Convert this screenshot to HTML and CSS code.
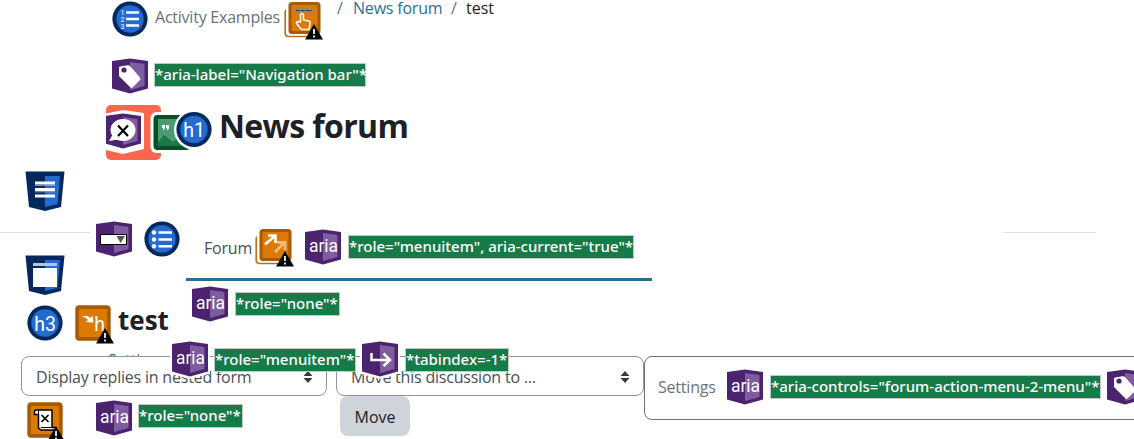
FILE: index.html
```html
<!DOCTYPE html>
<html lang="en">
<head>
    <meta charset="UTF-8">
    <meta name="viewport" content="width=device-width, initial-scale=1.0">
    <title>News forum: test</title>
    <link rel="stylesheet" href="styles.css">
</head>
<body>
    <!-- shared icon shapes -->
    <svg class="defs" aria-hidden="true">
        <symbol id="shield" viewBox="0 0 36 36">
            <path d="M0 3L18 .5L36 3V30.500L18 35.500L0 30.500z" fill="#4b236f"/>
            <path d="M18 4L32.500 6V28L18 32z" fill="#7f5c9f"/>
        </symbol>
        <symbol id="aria" viewBox="0 0 36 36">
            <use href="#shield" width="36" height="36"/>
            <text x="18.500" y="23" class="icon-text aria-text">aria</text>
        </symbol>
        <symbol id="tag" viewBox="0 0 36 36">
            <use href="#shield" width="36" height="36"/>
            <path d="M8 8.500Q7 8.500 7 10V18L18.500 29.500Q19.500 30 20.500 29.500L28 22Q29 21 28 19.500L18 8Q17 7 15.500 7.200z" fill="#fff"/>
            <circle cx="12" cy="12" r="2.600" fill="#4b236f"/>
        </symbol>
        <symbol id="disc" viewBox="0 0 36 36">
            <circle cx="18" cy="18" r="17.600" fill="#03295c"/>
            <circle cx="18" cy="18" r="13.700" fill="#216bd1"/>
        </symbol>
        <symbol id="css" viewBox="0 0 40 40">
            <path d="M.5.500H39.500L36 36L20 40L4 36z" fill="#03295c"/>
            <path d="M20 5H35L32.500 33L20 36z" fill="#216bd1"/>
        </symbol>
        <symbol id="alert" viewBox="0 0 18 16">
            <path d="M9 0L18 15.500H0z" fill="#000"/>
            <path d="M9 5V10M9 11.500V13.500" stroke="#fff" stroke-width="1.700"/>
        </symbol>
        <symbol id="box" viewBox="0 0 36 36">
            <rect x=".3" y=".3" width="35.400" height="35.400" rx="4" fill="#a65b00"/>
            <rect x="4" y="4" width="28" height="28" rx="1" fill="#db7900"/>
        </symbol>
        <symbol id="stack" viewBox="0 0 40 40">
            <path d="M2 10Q1.200 10 1.200 12V33Q1.200 36.500 4.500 36.500H30" fill="none" stroke="#b86f17" stroke-width="1.600"/>
            <rect x="4.500" y="2" width="32" height="32" rx="3.500" fill="#a65b00"/>
            <rect x="7.500" y="5" width="26" height="26" rx="1" fill="#db7900"/>
        </symbol>
    </svg>

    <div class="page">
        <nav class="breadcrumb">
            <svg class="icon" viewBox="0 0 36 36">
                <use href="#disc" width="36" height="36"/>
                <path d="M14 11.500H27M14 18H27M14 24.500H27" stroke="#fff" stroke-width="2.300"/>
                <g class="icon-text tiny-text"><text x="10.500" y="13.500">1</text><text x="10.500" y="20.500">2</text><text x="10.500" y="27.500">3</text></g>
            </svg>
            <span class="crumb-first">Activity Examples</span>
            <svg class="icon-lg" viewBox="0 0 40 40">
                <use href="#stack" width="40" height="40"/>
                <path d="M10.500 8.500H30V12.500H10.500z" fill="#888"/>
                <path d="M12 10.500H28" stroke="#333" stroke-dasharray="4 1"/>
                <path d="M16.500 22V14.500Q18 12.500 19.500 14.500V20L25 21Q26.500 21.500 26 24L25 29.500H17.500L12.500 23.500Q12 21.500 14 21.500z" fill="#db7900" stroke="#fff" stroke-width="1.500" stroke-linejoin="round"/>
                <use href="#alert" x="21" y="24" width="18" height="16"/>
            </svg>
            <span class="sep">/</span>
            <a class="crumb-link">News forum</a>
            <span class="sep">/</span>
            <span class="crumb-last">test</span>
        </nav>

        <div class="note-row nav-note">
            <svg class="icon"><use href="#tag"/></svg>
            <span class="note w212">*aria-label="Navigation bar"*</span>
        </div>

        <header class="page-header">
            <div class="module-icon">
                <svg class="header-icons" viewBox="0 0 106 55">
                    <path d="M0 8.500L17 5L38 8V44L17 49L0 45z" fill="#fff"/>
                    <use href="#shield" x="-1" y="8" width="36" height="36"/>
                    <ellipse cx="17" cy="25" rx="12.500" ry="11" fill="#fff"/>
                    <path d="M7 29L3 36L15 34z" fill="#fff"/>
                    <path d="M12 20.500L22 31M22 20.500L12 31" stroke="#000" stroke-width="2.200"/>
                    <rect x="44.500" y="7" width="42" height="41" rx="6" fill="#fff"/>
                    <rect x="47.500" y="10" width="37" height="35" rx="4" fill="#005126"/>
                    <path d="M52 14H82V41H52z" fill="#177a49"/>
                    <path d="M52 14H82V41L73 32L67 37L58 30L52 37z" fill="#4d9b73"/>
                    <path d="M56 20H59V23L58 25H57V23H56zM60 20H63V23L62 25H61V23H60z" fill="#fff"/>
                    <circle cx="88" cy="24.700" r="20" fill="#fff"/>
                    <use href="#disc" x="70" y="6.500" width="36" height="36"/>
                    <text x="88" y="31.500" class="icon-text h-text">h1</text>
                </svg>
            </div>
            <h1>News forum</h1>
        </header>

        <div class="middle">
            <aside class="rail">
                <svg class="icon-css" viewBox="0 0 40 40">
                    <use href="#css" width="40" height="40"/>
                    <path d="M10 12H30M10 18.500H30M10 25H30" stroke="#fff" stroke-width="3.200"/>
                    <path d="M10 14.300H30M10 20.800H30" stroke="#9aa9c4" stroke-width="1"/>
                </svg>
                <hr>
                <svg class="icon-css" viewBox="0 0 40 40">
                    <use href="#css" width="40" height="40"/>
                    <path d="M8 8H32V11H8z" fill="#b5c3de"/>
                    <path d="M8 13H32V32H8z" fill="#fff"/>
                </svg>
            </aside>
            <div class="tab-icons">
                <svg class="icon" viewBox="0 0 36 36">
                    <use href="#shield" width="36" height="36"/>
                    <rect x="4.500" y="13.500" width="26" height="10" fill="#fff" stroke="#000"/>
                    <path d="M20.500 15H29L24.700 22z" fill="#555"/>
                </svg>
                <svg class="icon" viewBox="0 0 36 36">
                    <use href="#disc" width="36" height="36"/>
                    <path d="M14.500 11.500H28M14.500 18.500H28M14.500 25.200H28" stroke="#fff" stroke-width="2.600"/>
                    <g fill="#fff"><circle cx="10" cy="11.500" r="2.200"/><circle cx="10" cy="18.500" r="2.200"/><circle cx="10" cy="25.200" r="2.200"/></g>
                </svg>
            </div>
            <div class="tabs">
                <div class="tab">
                    <span class="tab-name">Forum</span>
                    <svg class="icon-lg" viewBox="0 0 40 40">
                        <use href="#stack" width="40" height="40"/>
                        <path d="M10 17.500L20 9M13 8.500H20.500V16" fill="none" stroke="#fff" stroke-width="2.500"/>
                        <path d="M20 25L29 16M22 15.500H30V23" fill="none" stroke="#f0bd80" stroke-width="2.800"/>
                        <use href="#alert" x="21" y="24" width="18" height="16"/>
                    </svg>
                    <svg class="icon"><use href="#aria"/></svg>
                    <span class="note w286">*role="menuitem", aria-current="true"*</span>
                </div>
                <div class="note-row tab-note">
                    <svg class="icon"><use href="#aria"/></svg>
                    <span class="note w105">*role="none"*</span>
                </div>
            </div>
            <hr class="rule-right">
        </div>

        <div class="discussion">
            <svg class="icon" viewBox="0 0 36 36">
                <use href="#disc" width="36" height="36"/>
                <text x="18" y="25.500" class="icon-text h-text">h3</text>
            </svg>
            <svg class="icon-lg" viewBox="0 0 40 40">
                <use href="#box" width="36" height="36"/>
                <path d="M7 12Q11 9 15.500 13L17.500 10.500L18.500 17.500L10.500 17L13 15Q11 12 7 12z" fill="#fff"/>
                <text x="24.500" y="25.500" class="icon-text h-text">h</text>
                <use href="#alert" x="21" y="23" width="18" height="16"/>
            </svg>
            <h3>test</h3>
        </div>

        <a class="hidden-link">Settings</a>
        <div class="controls">
            <div class="mode">
                <div class="select">Display replies in nested form
                    <svg class="caret" viewBox="0 0 10 12"><path d="M5 0L9.500 5H.5zM.5 7H9.500L5 12z" fill="#343a40"/></svg>
                </div>
                <div class="note-row mode-note">
                    <svg class="icon script-icon" viewBox="0 0 36 36">
                        <use href="#box" width="36" height="36"/>
                        <path d="M11.500 12.500H7.500V9Q7.500 8 9 8H25V25.500H28.500V28H14L11.500 26z" fill="#fff" stroke="#000" stroke-width="1.500" stroke-linejoin="round"/>
                        <path d="M11.500 8V12.500M14 25.500H25" stroke="#000"/>
                        <path d="M14.500 13L21.500 20M21.500 13L14.500 20" stroke="#000" stroke-width="1.700"/>
                        <use href="#alert" x="20" y="24" width="18" height="16"/>
                    </svg>
                    <svg class="icon"><use href="#aria"/></svg>
                    <span class="note w105">*role="none"*</span>
                </div>
            </div>
            <div class="move">
                <div class="select">Move this discussion to ...
                    <svg class="caret" viewBox="0 0 10 12"><path d="M5 0L9.500 5H.5zM.5 7H9.500L5 12z" fill="#343a40"/></svg>
                </div>
                <button class="move-button">Move</button>
            </div>
            <div class="settings">
                <span class="settings-name">Settings</span>
                <svg class="icon"><use href="#aria"/></svg>
                <span class="note w331">*aria-controls="forum-action-menu-2-menu"*</span>
                <svg class="icon"><use href="#tag"/></svg>
            </div>
        </div>

        <!-- annotations of the collapsed menu, on top of the selects -->
        <div class="note-row floating">
            <svg class="icon halo"><use href="#aria"/></svg>
            <span class="note w142">*role="menuitem"*</span>
            <svg class="icon halo" viewBox="0 0 36 36">
                <use href="#shield" width="36" height="36"/>
                <path d="M9.500 12V19H27M21.500 12.500L28 19L21.500 25" fill="none" stroke="#fff" stroke-width="2.500"/>
            </svg>
            <span class="note w104">*tabindex=-1*</span>
        </div>
    </div>
</body>
</html>
```

FILE: styles.css
```css
* { box-sizing: border-box; }
body { margin: 0; background: #fff; color: #1d2125; font: 16px/24px "Open Sans", "Noto Sans", sans-serif; letter-spacing: -0.2px; overflow: hidden; }
.defs { position: absolute; width: 0; height: 0; }
.page { position: relative; width: 1134px; height: 439px; overflow: hidden; }
h1, h3 { margin: 0; font-weight: 700; white-space: nowrap; }
hr { margin: 0; border: 0; border-top: 1px solid #dee2e6; }

.icon { width: 36px; height: 36px; flex: none; overflow: visible; }
.icon-lg { width: 40px; height: 40px; flex: none; overflow: visible; }
.icon-css { width: 40px; height: 40px; display: block; }
.icon-text { font-family: Roboto, sans-serif; letter-spacing: 0; fill: #fff; text-anchor: middle; }
.aria-text { font-size: 17.5px; }
.h-text { font-size: 19.5px; }
.tiny-text { font-size: 7px; }

.note-row { display: flex; align-items: center; gap: 6px; }
.note { flex: none; height: 24px; border: 1px solid #c4c8c6; background: #177a49; color: #fff; font: 500 15px/20px "Noto Sans", sans-serif; letter-spacing: 0; white-space: nowrap; }
.w104 { width: 104px; }
.w105 { width: 105px; }
.w142 { width: 142px; }
.w212 { width: 212px; }
.w286 { width: 286px; }
.w331 { width: 331px; }

.breadcrumb { display: flex; height: 58px; padding: 1px 0 0 112px; line-height: 32px; white-space: nowrap; }
.crumb-first { width: 130px; margin-left: 7px; color: #6a737b; letter-spacing: -0.23px; }
.breadcrumb .icon-lg { margin: -1px 1px 0 -1px; }
.sep { width: 16px; margin-left: 12px; color: #6a737b; line-height: 14px; }
.crumb-link { width: 86px; color: #306f8f; line-height: 14px; }
.crumb-last { margin-left: -1px; line-height: 14px; letter-spacing: 0; }
.nav-note { height: 35px; padding-left: 112px; }
.nav-note .note { margin-top: -1px; }

.page-header { display: flex; height: 55px; margin: 12px 0 0 106px; }
.module-icon { width: 55px; height: 55px; border-radius: 5px; background: #fb664f; }
.header-icons { display: block; width: 106px; height: 55px; overflow: hidden; }
h1 { margin-left: 58px; font-size: 32px; line-height: 42px; letter-spacing: -0.65px; }

.middle { display: flex; height: 145px; }
.rail { width: 90px; padding-top: 11px; }
.rail .icon-css { margin-left: 25px; }
.rail hr { margin: 21px 0 22px; }
.tab-icons { display: flex; gap: 12px; padding: 61px 6px 0; }
.tabs { width: 466px; }
.tab { display: flex; align-items: center; height: 121px; padding: 56px 0 0 18px; border-bottom: 3px solid #276f90; }
.tab-name { width: 52px; margin-top: 2px; color: #495057; }
.tab .icon-lg { margin: 0 1px 0 -1px; }
.tab .icon { margin: -1px 7px 0 9px; }
.tab .note { margin-top: -1px; }
.tab-note { margin: 5px 0 0 6px; gap: 7px; }
.rule-right { width: 93px; margin: 72px 0 0 351px; }

.discussion { display: flex; height: 51px; padding-left: 27px; }
.discussion .icon-lg { margin-left: 12px; }
h3 { margin-left: 3px; font-size: 26px; line-height: 31px; letter-spacing: 0; }
.hidden-link { position: absolute; top: 348px; left: 108px; color: #276f90; }

.controls { position: relative; display: grid; grid-template-columns: 306px 308px 520px; column-gap: 9px; height: 83px; padding-left: 21px; }
.select { display: flex; align-items: center; justify-content: space-between; height: 40px; padding: 2px 13px 0 14px; border: 1px solid #8f959e; border-radius: 8px; background: #fff; color: #495057; letter-spacing: -0.21px; white-space: nowrap; }
.caret { width: 10px; height: 12px; }
.mode-note { padding: 4px 0 0 6px; align-items: flex-start; }
.mode-note .icon + .icon { margin-left: 27px; }
.mode-note .script-icon { margin-top: 2px; }
.mode-note .note { margin-top: 4px; }
.move-button { display: block; width: 70px; height: 40px; margin-left: 4px; padding: 2px 0 0; border: 0; border-radius: 8px; background: #ced4da; color: #1d2125; font: inherit; letter-spacing: 0; }
.settings { display: flex; align-items: center; gap: 6px; height: 64px; margin-left: -9px; padding: 0 0 3px 13px; border: 1px solid #6a737b; border-radius: 8px; background: #fff; }
.settings-name { width: 63px; color: #6a737b; }
.settings .icon { margin-top: 1px; }
.settings .icon:last-child { margin-left: -1px; }
.settings .note { margin: 0 1px; }

.floating { position: absolute; top: 341px; left: 172px; }
.floating .note { margin-top: 2px; }
.floating .w104 { margin-left: 1px; }
.halo { filter: drop-shadow(2px 0 0 #fff) drop-shadow(-2px 0 0 #fff) drop-shadow(0 2px 0 #fff); }
```
